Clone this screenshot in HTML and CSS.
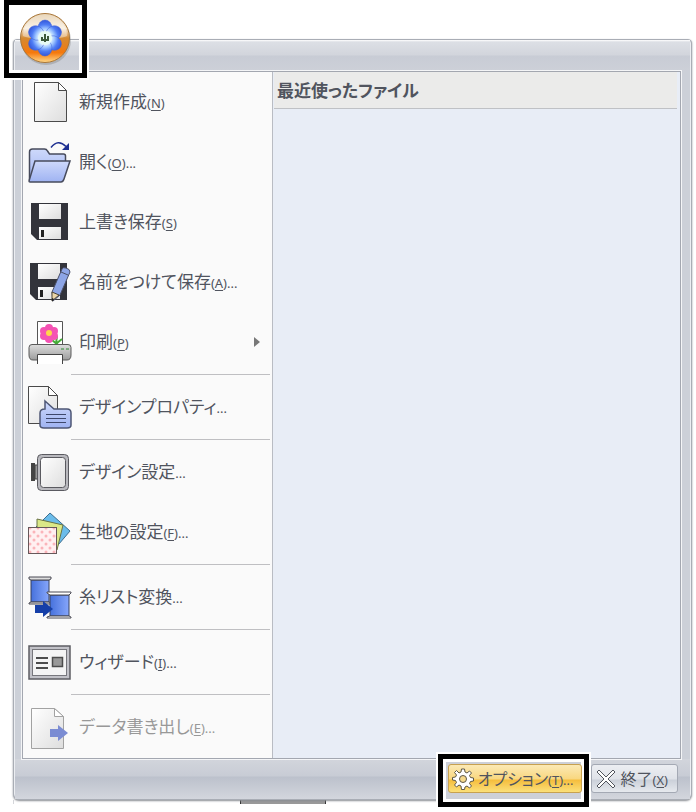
FILE: index.html
```
<!DOCTYPE html>
<html lang="ja">
  <head>
    <meta charset="UTF-8" />
    <meta name="viewport" content="width=device-width, initial-scale=1.0" />
    <title>メニュー</title>
    <link rel="stylesheet" href="styles.css" />
  </head>
  <body>
    <svg class="defs" width="0" height="0" aria-hidden="true">
      <defs>
        <linearGradient id="paper" x1="0" y1="0" x2="1" y2="1">
          <stop offset="0" stop-color="#ffffff" />
          <stop offset="1" stop-color="#dedede" />
        </linearGradient>
        <linearGradient id="blue" x1="0" y1="0" x2="0" y2="1">
          <stop offset="0" stop-color="#ced9fb" />
          <stop offset="1" stop-color="#9fb3f2" />
        </linearGradient>
        <linearGradient id="thread" x1="0" y1="0" x2="1" y2="0">
          <stop offset="0" stop-color="#4671dc" />
          <stop offset="1" stop-color="#86a6fb" />
        </linearGradient>
        <linearGradient id="metal" x1="0" y1="0" x2="0" y2="1">
          <stop offset="0" stop-color="#dddddd" />
          <stop offset="1" stop-color="#9c9c9c" />
        </linearGradient>
        <linearGradient id="orb" x1="0" y1="0" x2="0" y2="1">
          <stop offset="0" stop-color="#d9b98a" />
          <stop offset="0.3" stop-color="#f7ead6" />
          <stop offset="0.5" stop-color="#d58a32" />
          <stop offset="0.8" stop-color="#f5780c" />
          <stop offset="1" stop-color="#ffd98a" />
        </linearGradient>
        <radialGradient id="petal" gradientUnits="userSpaceOnUse" cx="27" cy="27" r="19">
          <stop offset="0.3" stop-color="#eefaff" />
          <stop offset="0.5" stop-color="#9cc4ff" />
          <stop offset="0.7" stop-color="#4f7df5" />
          <stop offset="1" stop-color="#2d4ed2" />
        </radialGradient>
        <pattern id="dots" width="8" height="8" patternUnits="userSpaceOnUse">
          <rect width="8" height="8" fill="#fff0f1" />
          <circle cx="2" cy="2" r="1.5" fill="#fbb4ba" />
          <circle cx="6" cy="6" r="1.5" fill="#fbb4ba" />
        </pattern>
      </defs>
    </svg>

    <div class="window">
      <header class="title-bar">
        <div class="orb-frame">
          <button class="orb-btn" aria-label="メニュー">
            <svg viewBox="0 0 54 54" width="54" height="54">
              <circle cx="28" cy="29" r="25" fill="#777777" opacity="0.35" />
              <circle cx="27" cy="27" r="24.5" fill="url(#orb)" stroke="#a9773a" />
              <path d="M5 25a22 22 0 0 1 44 0c-8 4-36 4-44 0z" fill="#ffffff" opacity="0.4" />
              <g fill="url(#petal)" stroke="#3f62da" stroke-width="0.5">
                <ellipse cx="27" cy="17" rx="7" ry="8" />
                <ellipse cx="27" cy="17" rx="7" ry="8" transform="rotate(60 27 27)" />
                <ellipse cx="27" cy="17" rx="7" ry="8" transform="rotate(120 27 27)" />
                <ellipse cx="27" cy="17" rx="7" ry="8" transform="rotate(180 27 27)" />
                <ellipse cx="27" cy="17" rx="7" ry="8" transform="rotate(240 27 27)" />
                <ellipse cx="27" cy="17" rx="7" ry="8" transform="rotate(300 27 27)" />
              </g>
              <circle cx="27" cy="27" r="7" fill="#e6faf4" />
              <path d="M24 26v4M27 23v8M30 25v5M24 29h5" stroke="#3d5a3c" stroke-width="2" fill="none" />
            </svg>
          </button>
        </div>
      </header>

      <main class="panel">
        <nav class="menu">
          <button class="item">
            <svg class="icon" viewBox="0 0 44 44">
              <path d="M6.500 2.500h24l8 8v31h-32z" fill="url(#paper)" stroke="#4a4a4a" />
              <path d="M30.500 2.500v8h8z" fill="#ffffff" stroke="#4a4a4a" />
            </svg>
            <span>新規作成<small>(<u>N</u>)</small></span>
          </button>
          <button class="item">
            <svg class="icon" viewBox="0 0 44 44">
              <path d="M1.500 40V12q0-3 3-3h12q2 0 3 2l2 3h14q2 0 2 2v8l-6 17h-28q-2 0-2-2z" fill="url(#blue)" stroke="#474b5c" stroke-width="1.500" />
              <path d="M7 21h35l-6 18q-1 3-3 3h-31q-1 0-1-1z" fill="url(#blue)" stroke="#474b5c" stroke-width="1.500" />
              <path d="M23 7.500q7-9 15-1" fill="none" stroke="#1d2f91" stroke-width="1.500" />
              <path d="M41 3v7h-7z" fill="#1d2f91" />
            </svg>
            <span>開く<small>(<u>O</u>)...</small></span>
          </button>
          <button class="item">
            <svg class="icon" viewBox="0 0 44 44">
              <path d="M3 3h37v37H9l-6-6z" fill="#33343b" />
              <path d="M11 4h22v15H11z" fill="url(#paper)" />
              <path d="M11 27h22v12H11z" fill="url(#paper)" />
              <path d="M13 30h3v7h-3z" fill="#222222" />
            </svg>
            <span>上書き保存<small>(<u>S</u>)</small></span>
          </button>
          <button class="item">
            <svg class="icon" viewBox="0 0 44 44">
              <path d="M2 3h37v37H8l-6-6z" fill="#33343b" />
              <path d="M10 4h22v15H10z" fill="url(#paper)" />
              <path d="M10 27h22v12H10z" fill="url(#paper)" />
              <path d="M12 30h3v7h-3z" fill="#222222" />
              <path d="M34 9q1-2 4-1 4 1 4 4L32 35l-7 6-1-9z" fill="#8da5e6" stroke="#4b5069" />
              <path d="M24 32l7 3-7 6z" fill="#ecd6a8" stroke="#4b4335" />
              <path d="M33 12l7 3" stroke="#4b5069" />
              <path d="M24 38l2 1-2 3z" fill="#222222" />
            </svg>
            <span>名前をつけて保存<small>(<u>A</u>)...</small></span>
          </button>
          <button class="item">
            <svg class="icon" viewBox="0 0 44 44">
              <path d="M9.500 1.500h25v24h-25z" fill="#ffffff" stroke="#555555" />
              <path d="M24 20l6 5M28 24l1-8M29 23l5-4" stroke="#45ad38" stroke-width="2" />
              <g fill="#f553b4">
                <circle cx="21" cy="8" r="4" />
                <circle cx="26" cy="11" r="4" />
                <circle cx="26" cy="16" r="4" />
                <circle cx="21" cy="19" r="4" />
                <circle cx="16" cy="16" r="4" />
                <circle cx="16" cy="11" r="4" />
                <circle cx="21" cy="13" r="5" />
              </g>
              <circle cx="21" cy="13" r="3" fill="#ffd54a" />
              <path d="M4 24.500h36q3 0 3 3V35q0 5-4 5H5q-4 0-4-5v-7.500q0-3 3-3z" fill="url(#metal)" stroke="#5a5a5a" />
              <path d="M9.500 44V34.500h25V44" fill="#ffffff" stroke="#444444" />
              <path d="M33 29h3M38 29h3" stroke="#2f8a35" stroke-width="1" />
            </svg>
            <span>印刷<small>(<u>P</u>)</small></span>
            <span class="submenu-arrow"></span>
          </button>
          <hr />
          <button class="item">
            <svg class="icon" viewBox="0 0 44 44">
              <path d="M0.500 1.500h20l9 9v28h-29z" fill="url(#paper)" stroke="#4a4a4a" />
              <path d="M20.500 1.500v9h9z" fill="#ffffff" stroke="#4a4a4a" />
              <path d="M17 16l9 8h13q4 0 4 4v12q0 3-4 3H16q-4 0-4-3V28q0-4 5-4z" fill="url(#blue)" stroke="#4d5674" stroke-width="1.500" />
              <path d="M18 29.500h20M18 33.500h20M18 37.500h20" stroke="#3e486c" />
            </svg>
            <span>デザインプロパティ<small>...</small></span>
          </button>
          <hr />
          <button class="item">
            <svg class="icon" viewBox="0 0 44 44">
              <path d="M3 13h4v18H3z" fill="#444444" />
              <path d="M7 15h3v14H7z" fill="#999999" stroke="#444444" />
              <rect x="9.500" y="4.500" width="31" height="36" rx="4" fill="#b9b9be" stroke="#5a5a60" />
              <rect x="12.500" y="7.500" width="25" height="30" rx="3" fill="url(#paper)" stroke="#5a5a60" />
            </svg>
            <span>デザイン設定<small>...</small></span>
          </button>
          <button class="item">
            <svg class="icon" viewBox="0 0 44 44">
              <path d="M22 3l20 18-17 20L5 20z" fill="#6bbcea" stroke="#3d6e8f" />
              <path d="M9 9l26 6-6 25-20-8z" fill="#dbe887" stroke="#6b7444" />
              <rect x="0.500" y="17.500" width="28" height="26" fill="url(#dots)" stroke="#66585a" />
            </svg>
            <span>生地の設定<small>(<u>F</u>)...</small></span>
          </button>
          <hr />
          <button class="item">
            <svg class="icon" viewBox="0 0 44 44">
              <path d="M3 5h18v22H3z" fill="url(#thread)" stroke="#36405e" />
              <path d="M1 2h22v2l-2 1H3L1 4zM3 27h18l2 1v1H1v-1z" fill="#dddddd" stroke="#4a4a54" />
              <path d="M22 20h19v21H22z" fill="url(#thread)" stroke="#36405e" />
              <path d="M19 17h24v1l-2 2H22l-3-2zM22 41h19l2 1v1H19v-1z" fill="#ffffff" stroke="#4a4a54" />
              <path d="M7 30h8v-4l10 8-10 8v-4H7z" fill="#153fa8" />
            </svg>
            <span>糸リスト変換<small>...</small></span>
          </button>
          <hr />
          <button class="item">
            <svg class="icon" viewBox="0 0 44 44">
              <rect x="1" y="6" width="41" height="33" fill="#c2c2c8" stroke="#5d5d63" stroke-width="1.500" />
              <rect x="4.500" y="9.500" width="34" height="26" fill="#f4f4f4" stroke="#77777d" />
              <path d="M8 18h12M8 23h12M8 28h12" stroke="#4c4c4c" stroke-width="2" />
              <rect x="24.500" y="17.500" width="10" height="9" fill="#999999" stroke="#4c4c4c" stroke-width="1.500" />
            </svg>
            <span>ウィザード<small>(<u>I</u>)...</small></span>
          </button>
          <hr />
          <button class="item" disabled>
            <svg class="icon" viewBox="0 0 44 44">
              <path d="M3.500 3.500h23l9 8v32h-32z" fill="url(#paper)" stroke="#a2a2a2" />
              <path d="M26.500 3.500v8h9z" fill="#ffffff" stroke="#a2a2a2" />
              <path d="M22 24h8v-4l10 8-10 8v-4h-8z" fill="#7b8cd3" />
            </svg>
            <span>データ書き出し<small>(<u>E</u>)...</small></span>
          </button>
        </nav>

        <section class="recent">
          <h2>最近使ったファイル</h2>
        </section>
      </main>

      <footer class="bottom-bar">
        <div class="option-frame">
          <button class="foot-btn active">
            <svg viewBox="0 0 22 22" width="22" height="22">
              <path d="M9.500 1h3l.5 3 2 1 2.500-2 2 2-2 2.500 1 2 3 .5v3l-3 .5-1 2 2 2.500-2 2-2.500-2-2 1-.5 2.500h-3L9 18l-2-1-2.500 2-2-2 2-2.500-1-2-3-.5V9.500l3-.5 1-2-2-2.500 2-2L7 5l2-1z" fill="#ffffff" stroke="#5c5747" />
              <circle cx="11" cy="11" r="3.500" fill="#f6d98a" stroke="#5c5747" />
            </svg>
            <span>オプション<small>(<u>T</u>)...</small></span>
          </button>
        </div>
        <button class="foot-btn">
          <svg viewBox="0 0 22 22" width="22" height="22">
            <path d="M4 2l7 7 7-7 2 2-7 7 7 7-2 2-7-7-7 7-2-2 7-7-7-7z" fill="#ffffff" stroke="#50545c" />
          </svg>
          <span>終了<small>(<u>X</u>)</small></span>
        </button>
      </footer>
    </div>
    <div class="behind"><span></span></div>
  </body>
</html>
```
FILE: styles.css
```
* {
  box-sizing: border-box;
}

body {
  min-height: 100vh;
  margin: 0;
  padding: 39px 4px 8px 13px;
  background: #ffffff;
  color: #50545e;
  font-family: "Noto Sans CJK JP", sans-serif;
  font-size: 17px;
  line-height: 24px;
  font-feature-settings: "palt";
}

.defs {
  position: absolute;
}

button {
  font: inherit;
  color: inherit;
  font-feature-settings: inherit;
  cursor: pointer;
}

small {
  font-family: "Noto Sans", sans-serif;
  font-size: 13px;
}

u {
  text-underline-offset: 2px;
}

.window {
  position: relative;
  padding: 0 9px;
  border: 1px solid #a9adb5;
  border-radius: 4px 4px 6px 6px;
  background: #ccd0d8;
  box-shadow: inset 0 0 0 1px #eceef2, 0 1px 2px #8a8d93;
}

.title-bar {
  height: 31px;
  margin: 0 -8px;
  background: linear-gradient(#ffffff 0, #dcdfe5 2px, #d2d5dc 15px, #c8ccd5 16px, #cdd0d8);
}

/* marker boxes around the two controls */
.orb-frame,
.option-frame {
  border: 5px solid #000000;
  outline: 2px solid #ffffff;
  box-shadow: inset 0 0 0 3px #ffffff;
}

.orb-frame {
  position: absolute;
  z-index: 1;
  top: -40px;
  left: -10px;
  width: 83px;
  height: 78px;
  padding: 6px 9px;
}

.orb-btn {
  display: block;
  padding: 0;
  border: 0;
  background: none;
}

.orb-btn svg {
  display: block;
}

.panel {
  display: flex;
  margin: 0 1px 0 -1px;
  border: 1px solid #a3a7b0;
  outline: 1px solid #f4f5f7;
}

.menu {
  flex: 0 0 250px;
  padding-bottom: 1px;
  border-right: 1px solid #b9bcc3;
  background: #fafafa;
}

.item {
  display: flex;
  align-items: center;
  gap: 7px;
  width: 100%;
  height: 60px;
  padding: 0 12px 0 5px;
  border: 0;
  background: none;
  text-align: left;
}

.item:hover:enabled {
  background: #fdf0c4;
}

.item:disabled {
  color: #989898;
  cursor: default;
}

.icon {
  flex: none;
  width: 44px;
  height: 44px;
}

.submenu-arrow {
  margin-left: auto;
  border: 5px solid transparent;
  border-left: 6px solid #777777;
  border-right: 0;
}

.menu hr {
  height: 1px;
  margin: 2px 2px 2px 48px;
  border: 0;
  background: #bfbfc2;
}

.recent {
  flex: 1;
  background: #e8edf6;
}

.recent h2 {
  margin: 0 3px 0 1px;
  padding: 6px 3px;
  border-bottom: 1px solid #bfc1c5;
  background: #ebebea;
  font-size: 17px;
  font-weight: 700;
  line-height: 24px;
}

.bottom-bar {
  display: flex;
  justify-content: flex-end;
  align-items: flex-start;
  gap: 2px;
  height: 40px;
  margin: 0 -8px;
  padding: 5px 12px 0 0;
  background: linear-gradient(#d2d5dc, #c8ccd5 17px, #bcc1cc 18px, #d3d6dd);
}

.option-frame {
  z-index: 1;
  margin: -10px 0;
  padding: 5px 2px 9px 5px;
  background: #cdd0d8;
}

.foot-btn {
  display: flex;
  align-items: center;
  gap: 4px;
  height: 29px;
  padding: 0 9px 0 3px;
  border: 1px solid #a4a9b4;
  border-radius: 3px;
  background: linear-gradient(#eceef2, #dfe2e8 14px, #cbd0d9 15px, #e6e9ee);
  font-size: 16px;
  white-space: nowrap;
}

.foot-btn.active {
  padding-right: 7px;
  border-color: #c7a150;
  background: linear-gradient(#fbe9b5, #f9d77f 14px, #f5bd3c 15px, #fbe07a);
}

/* edge of the document left showing under the menu */
.behind {
  height: 4px;
  border-left: 1px solid #d4d6da;
}

.behind span {
  display: block;
  width: 86px;
  height: 4px;
  margin-left: 226px;
  border: 1px solid #333333;
  border-width: 0 1px;
  background: #999999;
}
```
